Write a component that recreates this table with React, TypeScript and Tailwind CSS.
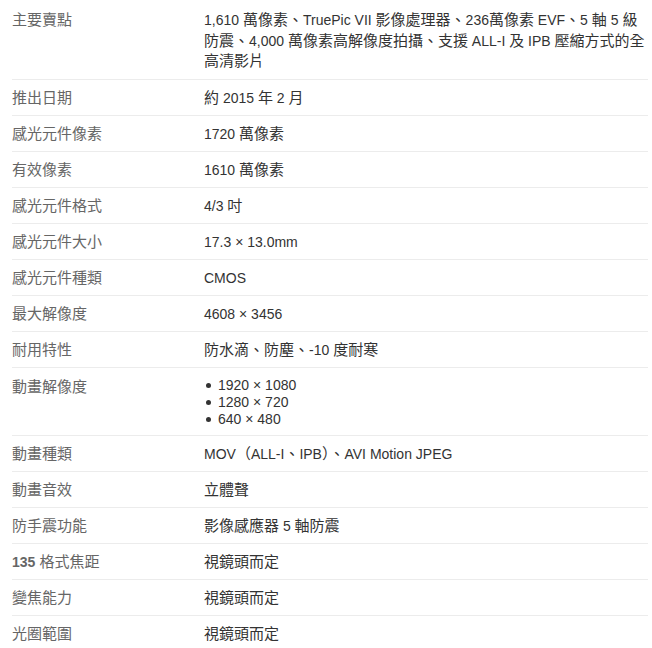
import React from 'react'

// Latin runs sit a pixel smaller than the CJK glyphs in the original page
function Mixed({ text }: { text: string }) {
  const parts = text.split(/([\u3000-\u30ff\u3400-\u9fff\uff00-\uffef]+)/)
  return (
    <>
      {parts.map((part, i) =>
        part === '' ? null : /[\u3000-\u30ff\u3400-\u9fff\uff00-\uffef]/.test(part) ? (
          <span key={i}>{part}</span>
        ) : (
          <span key={i} className="text-[14px]">
            {part}
          </span>
        ),
      )}
    </>
  )
}

type Spec = {
  label: React.ReactNode
  value: React.ReactNode
  kind?: 'multi' | 'list'
}

const specs: Spec[] = [
  {
    label: '主要賣點',
    kind: 'multi',
    value: (
      <>
        <span className="block whitespace-nowrap">
          <Mixed text="1,610 萬像素、TruePic VII 影像處理器、236萬像素 EVF、5 軸 5 級" />
        </span>
        <span className="block whitespace-nowrap">
          <Mixed text="防震、4,000 萬像素高解像度拍攝、支援 ALL-I 及 IPB 壓縮方式的全" />
        </span>
        <span className="block whitespace-nowrap">高清影片</span>
      </>
    ),
  },
  { label: '推出日期', value: <Mixed text="約 2015 年 2 月" /> },
  { label: '感光元件像素', value: <Mixed text="1720 萬像素" /> },
  { label: '有效像素', value: <Mixed text="1610 萬像素" /> },
  { label: '感光元件格式', value: <Mixed text="4/3 吋" /> },
  { label: '感光元件大小', value: <Mixed text="17.3 × 13.0mm" /> },
  { label: '感光元件種類', value: <Mixed text="CMOS" /> },
  { label: '最大解像度', value: <Mixed text="4608 × 3456" /> },
  { label: '耐用特性', value: <Mixed text="防水滴、防塵、-10 度耐寒" /> },
  {
    label: '動畫解像度',
    kind: 'list',
    value: (
      <ul className="text-[14px]">
        {['1920 × 1080', '1280 × 720', '640 × 480'].map((item) => (
          <li key={item} className="flex items-center">
            <span className="ml-[2px] mr-[7px] h-[5px] w-[5px] rounded-full bg-[#333]" />
            {item}
          </li>
        ))}
      </ul>
    ),
  },
  { label: '動畫種類', value: <Mixed text="MOV（ALL-I、IPB）、AVI Motion JPEG" /> },
  { label: '動畫音效', value: '立體聲' },
  { label: '防手震功能', value: <Mixed text="影像感應器 5 軸防震" /> },
  {
    label: (
      <>
        <span className="text-[14px] font-bold">135</span> 格式焦距
      </>
    ),
    value: '視鏡頭而定',
  },
  { label: '變焦能力', value: '視鏡頭而定' },
  { label: '光圈範圍', value: '視鏡頭而定' },
]

export default function App() {
  return (
    <div
      className="min-h-[648px] bg-white pl-[12px] pr-[4px] text-[15px]"
      style={{ fontFamily: '"Liberation Sans", "Noto Sans CJK TC", sans-serif' }}
    >
      {specs.map((spec, index) => {
        const pad =
          spec.kind === 'multi'
            ? 'pt-[10px] pb-[8px] leading-[19.5px]'
            : spec.kind === 'list'
              ? 'pt-[9px] pb-[7px] leading-[17px]'
              : 'pt-[8px] pb-[7px] leading-[20px]'
        return (
          <div key={index} className={`flex border-b border-[#ececec] ${pad}`}>
            <div className="w-[192px] shrink-0 leading-[20px] text-[#666]">{spec.label}</div>
            <div className="flex-1 text-[#333]">{spec.value}</div>
          </div>
        )
      })}
    </div>
  )
}
